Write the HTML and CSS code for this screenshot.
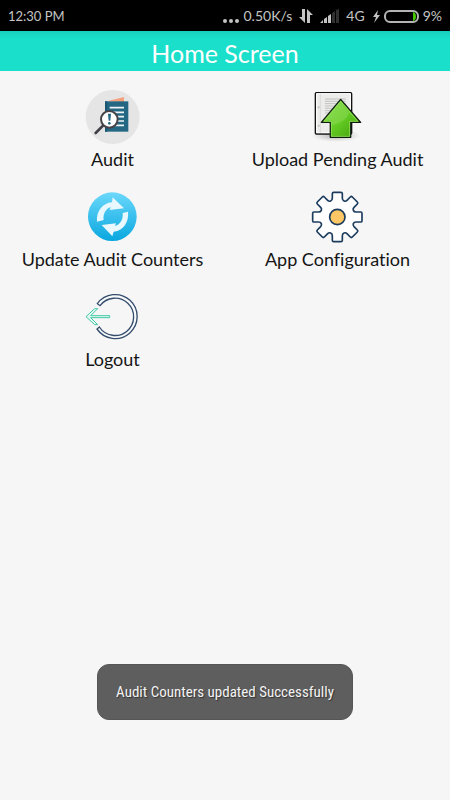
FILE: index.html
```html
<!DOCTYPE html>
<html lang="en">
<head>
<meta charset="utf-8">
<meta name="viewport" content="width=device-width, initial-scale=1">
<title>Home Screen</title>
<link rel="stylesheet" href="styles.css">
</head>
<body>
<div class="status">
  <span class="clock">12:30 PM</span>
  <div class="indicators">
    <svg class="dots" width="16" height="16" viewBox="0 0 16 16" aria-hidden="true"><g fill="#c4c4c4"><circle cx="2" cy="13" r="2"/><circle cx="8" cy="13" r="2"/><circle cx="14" cy="13" r="2"/></g></svg>
    <span class="speed">0.50K/s</span>
    <svg class="transfer" width="16" height="16" viewBox="0 0 16 16" aria-hidden="true"><path d="M4 1h3v14L1 9h3zM9 15V1l6 6h-3v8z" fill="#c4c4c4"/></svg>
    <svg class="signal" width="20" height="16" viewBox="0 0 20 16" aria-hidden="true"><path d="M0 15l3-3v3zM4 11l3-2v6H4zM8 8l3-2v9H8z" fill="#c4c4c4"/><path d="M12 5l3-2v12h-3zM16 2l3-1v14h-3z" fill="#303030"/></svg>
    <span class="network">4G</span>
    <svg class="battery" width="46" height="16" viewBox="0 0 46 16" aria-hidden="true"><path d="M5 2L0 9h3l-2 6 6-8H4z" fill="#c4c4c4"/><rect x="12" y="3" width="33" height="11" rx="5" fill="none" stroke="#b4b4b4" stroke-width="2"/><path d="M40 4c4 0 4 9 0 9z" fill="#45c800"/></svg>
    <span>9%</span>
  </div>
</div>
<header class="bar"><h1>Home Screen</h1></header>
<main class="menu">
  <button class="item" type="button">
    <svg class="icon" viewBox="0 21 225 180" aria-hidden="true">
      <circle cx="113" cy="111" r="81" fill="#e5e5e5"/>
      <path d="M96 64l51-13v15z" fill="#f5a17c"/>
      <path d="M90 64h70v91H90z" fill="#246783"/>
      <path d="M90 64h7v91h-7z" fill="#195773"/>
      <path d="M104 83h43M112 97h35M124 110h23M128 123h19M119 136h28" stroke="#edf4f5" stroke-width="5"/>
      <path d="M84 137l-22 22" stroke="#40404a" stroke-width="8" stroke-linecap="round"/>
      <circle cx="103" cy="118" r="25" fill="#fff" stroke="#454348" stroke-width="6"/>
      <path d="M99 101h9l-2 21h-5z" fill="#246783"/><circle cx="103" cy="130" r="4" fill="#246783"/>
    </svg>
    <span>Audit</span>
  </button>
  <button class="item" type="button">
    <svg class="icon" viewBox="0 21 225 180" aria-hidden="true">
      <defs>
        <linearGradient id="leaf" x1="0" y1="0" x2="1" y2="1"><stop offset="0" stop-color="#88dd45"/><stop offset=".55" stop-color="#62c922"/><stop offset="1" stop-color="#409c0b"/></linearGradient>
        <radialGradient id="shade"><stop offset="0" stop-color="#777" stop-opacity=".65"/><stop offset="1" stop-color="#aaa" stop-opacity="0"/></radialGradient>
      </defs>
      <ellipse cx="108" cy="167" rx="75" ry="19" fill="url(#shade)"/>
      <rect x="46" y="38" width="109" height="124" rx="3" fill="#ececea" stroke="#111" stroke-width="4"/>
      <path d="M50 41h101v117H50z" fill="none" stroke="#fff" stroke-width="3"/>
      <path d="M61 42v117" stroke="#d2d2d2" stroke-width="2"/>
      <path d="M75 57h62M75 64h62M75 71h62M75 78h55M75 85h50M75 92h27M75 99h25" stroke="#aaa" stroke-width="2"/>
      <circle cx="56" cy="82" r="3" fill="#bbb"/><circle cx="56" cy="137" r="3" fill="#bbb"/>
      <path d="M122 58l60 69h-30v45H91v-45H64z" fill="url(#leaf)" stroke="#101b10" stroke-width="4" stroke-linejoin="round"/>
      <path d="M122 64l51 60h-24v45H94v-45H72z" fill="none" stroke="#a1e970" stroke-width="2"/>
      <path d="M121 67l27 32c-9 20-25 30-51 37v-15H76z" fill="#b1e982" opacity=".28"/>
    </svg>
    <span>Upload Pending Audit</span>
  </button>
  <button class="item" type="button">
    <svg class="icon" viewBox="0 6 225 180" aria-hidden="true">
      <defs><linearGradient id="sky" x1="0" y1="0" x2="0" y2="1"><stop offset="0" stop-color="#6bd8fb"/><stop offset="1" stop-color="#09a7df"/></linearGradient></defs>
      <circle cx="112" cy="95" r="73" fill="url(#sky)"/>
      <g fill="#e9f7ff">
        <path d="M66 110c-3-30 16-56 45-58l2-15 34 33-43 5 3-8c-14 3-24 21-21 38z"/>
        <path d="M143 84l16-4c3 30-12 56-43 60l-4 14-32-34 43-5-3 8c16-5 25-20 23-39z"/>
      </g>
    </svg>
    <span>Update Audit Counters</span>
  </button>
  <button class="item" type="button">
    <svg class="icon" viewBox="0 6 225 180" aria-hidden="true">
      <g transform="translate(112 96)" stroke="#1c3c5e" stroke-width="5" stroke-linejoin="round">
        <path fill="#fff" d="M-15-56V-70Q-15-74-11-74H11Q15-74 15-70V-56Q15-50 20-48Q25-46 29-50L39-60Q42-63 45-60L60-45Q63-42 60-39L50-29Q46-25 48-20Q50-15 56-15H70Q74-15 74-11V11Q74 15 70 15H56Q50 15 48 20Q46 25 50 29L60 39Q63 42 60 45L45 60Q42 63 39 60L29 50Q25 46 20 48Q15 50 15 56V70Q15 74 11 74H-11Q-15 74-15 70V56Q-15 50-20 48Q-25 46-29 50L-39 60Q-42 63-45 60L-60 45Q-63 42-60 39L-50 29Q-46 25-48 20Q-50 15-56 15H-70Q-74 15-74 11V-11Q-74-15-70-15H-56Q-50-15-48-20Q-46-25-50-29L-60-39Q-63-42-60-45L-45-60Q-42-63-39-60L-29-50Q-25-46-20-48Q-15-50-15-56Z"/>
        <circle r="23" fill="#fec766"/>
      </g>
    </svg>
    <span>App Configuration</span>
  </button>
  <button class="item" type="button">
    <svg class="icon" viewBox="0 6 225 180" aria-hidden="true">
      <path d="M67 56A66 66 0 1 1 66 132L73 126A56 56 0 1 0 75 62Z" fill="#f8fafb" stroke="#344d6c" stroke-width="4"/>
      <path d="M104 92H47L68 71H59L33 95l26 24h9L47 98h57z" fill="#e3f8f2" stroke="#42c8a5" stroke-width="3" stroke-linejoin="round"/>
    </svg>
    <span>Logout</span>
  </button>
</main>
<div class="toast" role="status">Audit Counters updated Successfully</div>
</body>
</html>
```

FILE: styles.css
```css
* { box-sizing: border-box; }
body {
  margin: 0;
  min-height: 100vh;
  display: flex;
  flex-direction: column;
  background: #f6f6f6;
  color: #151515;
  font-family: Lato, "Liberation Sans", sans-serif;
  font-variant-ligatures: none;
}
.status {
  display: flex;
  align-items: center;
  justify-content: space-between;
  height: 31px;
  padding: 0 8px;
  background: #000;
  color: #c4c4c4;
  font-size: 14px;
  line-height: 20px;
}
.clock { font-size: 13px; }
.indicators { display: flex; align-items: center; gap: 4px; }
.indicators svg { display: block; }
.transfer, .signal { margin-left: 2px; }
.battery { margin-left: 4px; }
.network { margin-left: 2px; }
.bar {
  display: flex;
  align-items: center;
  justify-content: center;
  height: 40px;
  background: linear-gradient(#18cfbd, #19dfcb 8px);
  color: #fff;
}
h1 { margin: 0; padding-top: 4px; font-size: 25px; font-weight: 400; line-height: 32px; }
.menu {
  display: grid;
  grid-template-columns: 1fr 1fr;
  row-gap: 16px;
  padding-top: 16px;
}
.item {
  display: flex;
  flex-direction: column;
  align-items: center;
  margin: 0;
  padding: 0;
  border: 0;
  background: none;
  color: inherit;
  font: inherit;
  font-size: 18px;
  line-height: 24px;
}
.icon { display: block; width: 75px; height: 60px; }
.toast {
  align-self: center;
  margin: auto 0 80px;
  padding: 16px 18px;
  border: 1px solid #565656;
  border-radius: 12px;
  background: #5e5e5e;
  color: #f3f3f3;
  font-family: "Roboto Condensed", Roboto, sans-serif;
  font-size: 15px;
  line-height: 22px;
  text-shadow: 1px 1px 1px #333;
}
```
